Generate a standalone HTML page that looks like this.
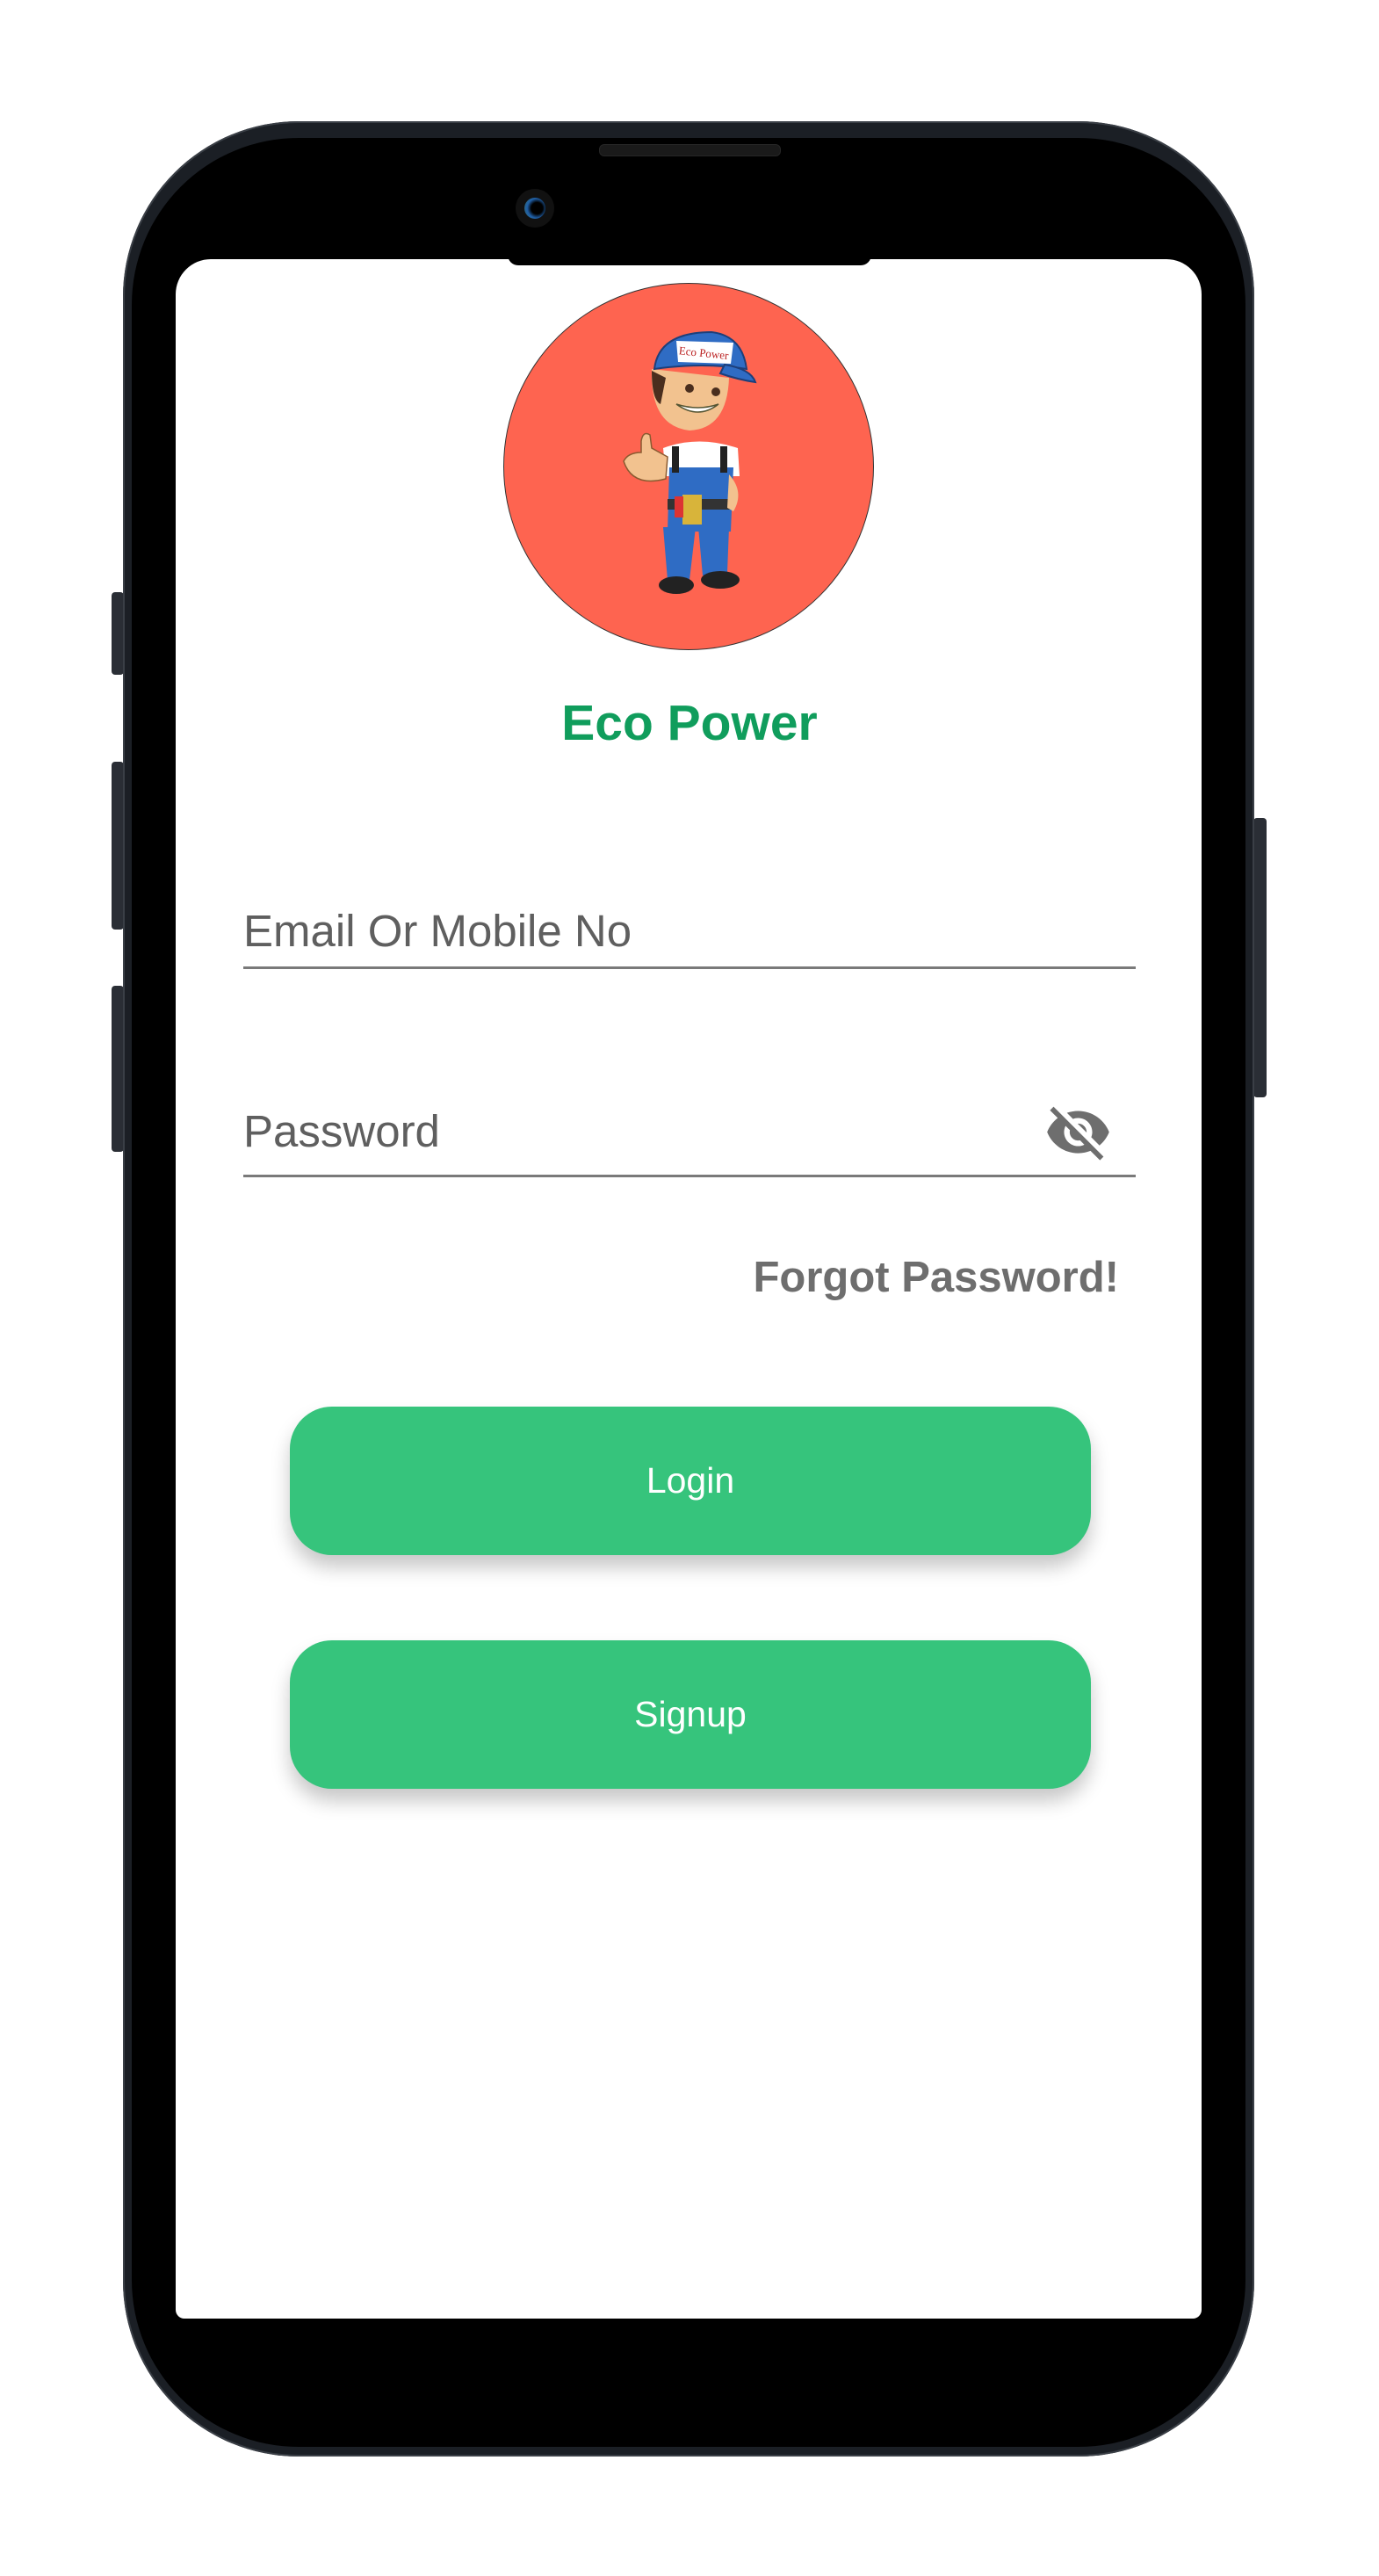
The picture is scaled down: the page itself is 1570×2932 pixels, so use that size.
<!DOCTYPE html>
<html><head><meta charset="utf-8"><style>
html,body{margin:0;padding:0;background:#fff;}
body{width:1570px;height:2932px;position:relative;overflow:hidden;font-family:"Liberation Sans",Roboto,sans-serif;}
.abs{position:absolute;}
.phone{left:140px;top:138px;width:1288px;height:2658px;background:#1b1f25;border-radius:200px;box-shadow:inset 0 0 0 2px #3a3f46;}
.bezel{left:150px;top:157px;width:1268px;height:2628px;background:#000;border-radius:190px;}
.screen{left:200px;top:295px;width:1168px;height:2344px;background:#fff;border-radius:40px 40px 10px 10px;overflow:hidden;}
.notch{left:578px;top:290px;width:414px;height:12px;background:#000;border-radius:0 0 30px 30px;}
.btn{position:absolute;left:330px;width:912px;height:169px;background:#36c47c;border-radius:48px;box-shadow:0 14px 22px rgba(0,0,0,0.22);color:#fff;font-size:41px;text-align:center;line-height:169px;}
.line{position:absolute;left:277px;width:1016px;height:3px;background:#7a7a7a;}
.lbl{position:absolute;left:277px;font-size:51px;color:#5f5f5f;}
</style></head><body>
<div class="abs" style="left:127px;top:674px;width:14px;height:94px;background:#2a2e35;border-radius:4px"></div>
<div class="abs" style="left:127px;top:867px;width:14px;height:191px;background:#2a2e35;border-radius:4px"></div>
<div class="abs" style="left:127px;top:1122px;width:14px;height:189px;background:#2a2e35;border-radius:4px"></div>
<div class="abs" style="left:1427px;top:931px;width:15px;height:318px;background:#2a2e35;border-radius:4px"></div>
<div class="abs phone"></div>
<div class="abs bezel"></div>
<div class="abs screen"></div>
<div class="abs notch"></div>
<div class="abs" style="left:682px;top:164px;width:205px;height:12px;background:#1a1a1a;border-radius:6px;border:1px solid #262626"></div>
<div class="abs" style="left:587px;top:215px;width:44px;height:44px;background:#111;border-radius:50%"></div>
<div class="abs" style="left:597px;top:225px;width:24px;height:24px;background:radial-gradient(circle at 60% 50%,#000 35%,#1f5fa8 60%,#3a6b55 100%);border-radius:50%"></div>

<div class="abs" style="left:573px;top:322px;width:422px;height:418px;background:#fe6450;border-radius:50%;border:1px solid #333;box-sizing:border-box"></div>
<svg class="abs" style="left:680px;top:360px" width="200" height="330" viewBox="0 0 200 330">
 <path d="M75 240 L80 300 L105 300 L112 240 Z" fill="#2f6cc4"/>
 <path d="M115 240 L120 295 L148 292 L150 240 Z" fill="#2f6cc4"/>
 <ellipse cx="90" cy="306" rx="20" ry="10" fill="#222"/>
 <ellipse cx="140" cy="300" rx="22" ry="10" fill="#222"/>
 <path d="M75 150 Q115 135 160 150 L162 182 L78 182 Z" fill="#fff"/>
 <path d="M82 172 L155 172 L152 245 L80 245 Z" fill="#2f6cc4"/>
 <rect x="85" y="148" width="8" height="30" fill="#222"/>
 <rect x="140" y="148" width="8" height="30" fill="#222"/>
 <rect x="80" y="208" width="75" height="12" fill="#333"/>
 <rect x="97" y="203" width="22" height="34" fill="#d8b43a"/>
 <rect x="88" y="205" width="10" height="24" fill="#d33"/>
 <path d="M150 180 Q168 200 155 222 L148 218 Z" fill="#f2c28f"/>
 <path d="M30 165 Q40 195 78 185 L80 160 L62 150 L60 135 Q52 130 50 142 L50 155 Q35 155 30 165Z" fill="#f2c28f" stroke="#8a5a30" stroke-width="1.5"/>
 <path d="M62 60 Q60 125 105 130 Q148 128 150 70 Z" fill="#f2c28f"/>
 <path d="M62 62 Q62 95 72 100 L78 70 Z" fill="#4a2e1e"/>
 <path d="M90 100 Q115 118 138 100 Q115 108 90 100Z" fill="#fff" stroke="#553" stroke-width="1.5"/>
 <circle cx="105" cy="82" r="5" fill="#4a2e1e"/><circle cx="135" cy="86" r="5" fill="#4a2e1e"/>
 <path d="M65 60 Q70 18 130 18 Q165 22 170 60 Q120 52 65 60Z" fill="#2f6cc4" stroke="#1d3f7a" stroke-width="2"/>
 <path d="M145 55 Q175 60 180 75 Q160 72 140 65Z" fill="#2f6cc4" stroke="#1d3f7a" stroke-width="2"/>
 <path d="M90 28 L155 30 L152 54 L92 52Z" fill="#fff"/>
 <text x="93" y="46" font-family="Liberation Serif,serif" font-size="13" fill="#b22" transform="rotate(6 120 40)">Eco Power</text>
</svg>

<div class="abs" style="left:0;width:1570px;top:790px;text-align:center;font-size:57px;font-weight:bold;color:#109d5c">Eco Power</div>

<div class="lbl" style="top:1030px">Email Or Mobile No</div>
<div class="line" style="top:1100px"></div>
<div class="lbl" style="top:1258px">Password</div>
<div class="line" style="top:1337px"></div>
<svg class="abs" style="left:1189px;top:1250px" width="77" height="77" viewBox="0 0 24 24"><path fill="#6e6e6e" d="M12 7c2.76 0 5 2.24 5 5 0 .65-.13 1.26-.36 1.83l2.920 2.92c1.51-1.26 2.7-2.89 3.43-4.75-1.73-4.39-6-7.5-11-7.5-1.4 0-2.74.25-3.98.7l2.16 2.16C10.74 7.13 11.35 7 12 7zM2 4.27l2.28 2.28.46.46C3.08 8.3 1.78 10.02 1 12c1.73 4.39 6 7.5 11 7.5 1.55 0 3.03-.3 4.38-.84l.42.42L19.73 22 21 20.73 3.27 3 2 4.27zM7.53 9.8l1.55 1.55c-.05.21-.08.43-.08.65 0 1.66 1.34 3 3 3 .22 0 .44-.03.65-.08l1.55 1.55c-.67.33-1.41.53-2.2.53-2.76 0-5-2.24-5-5 0-.79.2-1.53.53-2.2zm4.31-.78l3.15 3.15.02-.16c0-1.66-1.34-3-3-3l-.17.01z"/></svg>
<div class="abs" style="left:700px;width:574px;top:1426px;text-align:right;font-size:49px;font-weight:bold;color:#6e6e6e">Forgot Password!</div>

<div class="btn" style="top:1601px">Login</div>
<div class="btn" style="top:1867px">Signup</div>
</body></html>
